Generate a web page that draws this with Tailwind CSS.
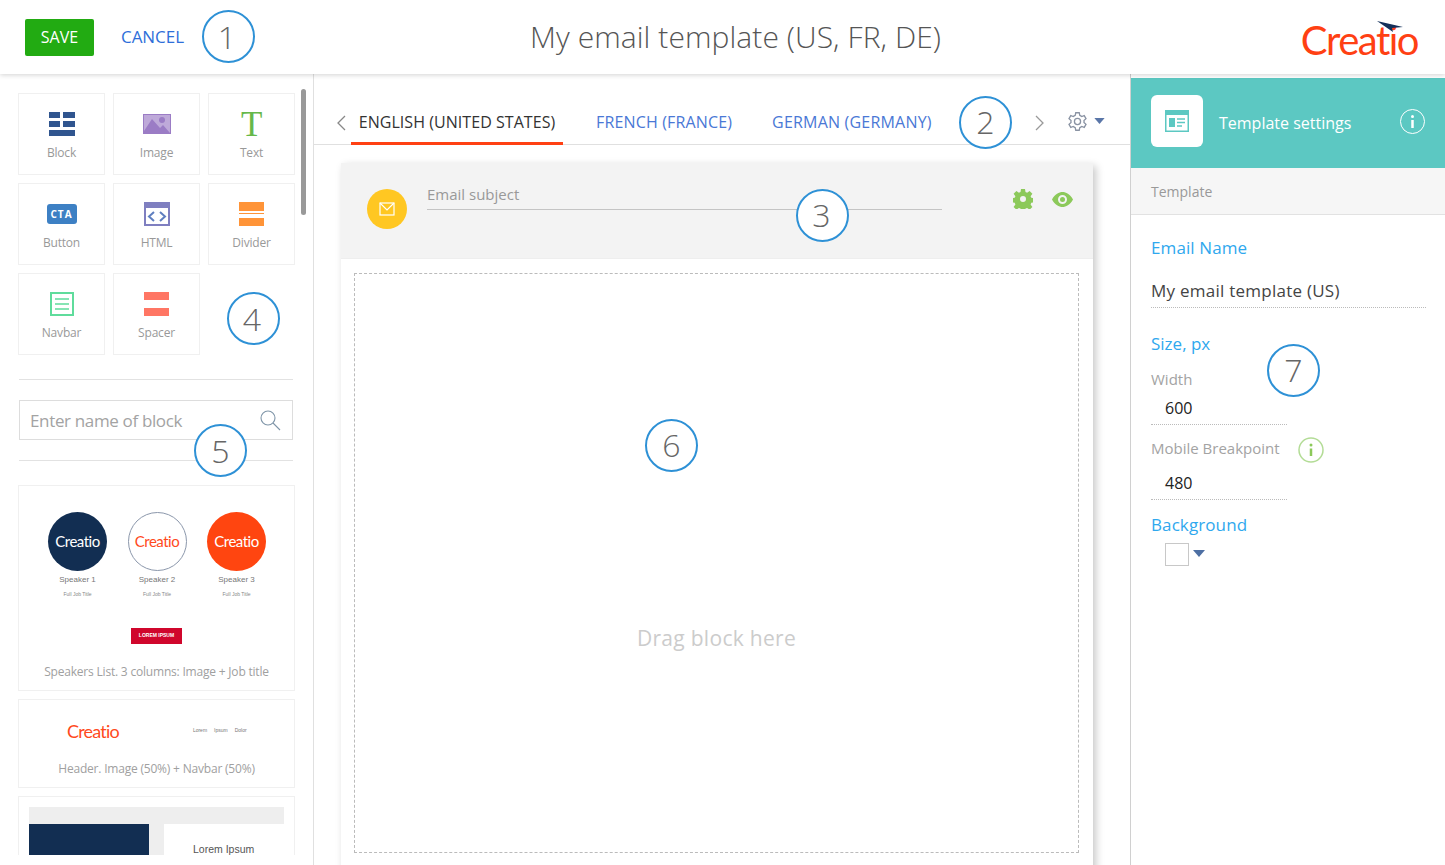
<!DOCTYPE html>
<html lang="en">
<head>
<meta charset="UTF-8">
<title>My email template</title>
<script src="https://cdn.jsdelivr.net/npm/@tailwindcss/browser@4"></script>
</head>
<body class="bg-white">
<div class="relative w-[1445px] h-[865px] overflow-hidden bg-white font-['Open_Sans',sans-serif] text-[#999]">

  <!-- header -->
  <header class="relative z-10 flex items-center h-[74px] pl-[25px] pr-[26px] bg-white shadow-[0_1px_5px_rgba(0,0,0,0.18)]">
    <button class="w-[69px] h-[37px] rounded-[2px] bg-[#22ab12] text-white text-[16px] tracking-[0.1px]">SAVE</button>
    <a class="ml-[27px] text-[17px] tracking-[-0.05px] text-[#2f6fd9]">CANCEL</a>
    <h1 class="absolute left-[530px] top-[15px] text-[30px] leading-[44px] font-light tracking-[0.07px] text-[#555] whitespace-nowrap">My email template (US, FR, DE)</h1>
    <div class="ml-auto relative w-[116px] h-[44px] mt-[6px]">
      <span class="absolute right-[1px] top-0 font-['Lato',sans-serif] text-[40px] leading-[44px] tracking-[-1.5px] text-[#ff4013]">Creatio</span>
      <svg class="absolute left-[74px] top-[3px]" width="27" height="12" viewBox="0 0 27 12"><path d="M0 0 L26 6 L15 7 L16 11 Z" fill="#14305a"/></svg>
    </div>
  </header>

  <div class="flex h-[791px]">
    <!-- left sidebar -->
    <aside class="relative w-[314px] shrink-0 border-r border-[#e0e0e0]">
      <div class="absolute left-[301px] top-[15px] w-[5px] h-[126px] rounded-full bg-[#999]"></div>
      <div class="h-[781px] overflow-hidden pl-[18px] pt-[19px]">
        <div class="grid grid-cols-[87px_87px_87px] auto-rows-[82px] gap-2 text-[12px] tracking-[-0.2px]">
          <div class="flex flex-col items-center border border-[#f0f0f0] pt-[18px]">
            <svg width="26" height="24" viewBox="0 0 26 24" fill="#30558f"><rect width="11" height="6"/><rect x="14" width="12" height="6"/><rect y="9" width="11" height="6"/><rect x="14" y="9" width="12" height="6"/><rect y="18" width="26" height="6"/></svg>
            <span class="mt-[9px] leading-[16px]">Block</span>
          </div>
          <div class="flex flex-col items-center border border-[#f0f0f0] pt-[20px]">
            <svg width="28" height="20" viewBox="0 0 28 20"><rect width="28" height="20" fill="#9b7cc5"/><rect x="1" y="1" width="26" height="18" fill="#fff" opacity=".35"/><path d="M1 19 L1 17 L9 5 L17 14 L20 11 L27 19 Z" fill="#9b7cc5"/><circle cx="19" cy="6" r="3" fill="#9b7cc5"/></svg>
            <span class="mt-[11px] leading-[16px]">Image</span>
          </div>
          <div class="flex flex-col items-center border border-[#f0f0f0] pt-[16px]">
            <span class="font-['Liberation_Serif',serif] text-[35px] leading-[30px] text-[#66b84a]">T</span>
            <span class="mt-[5px] leading-[16px]">Text</span>
          </div>

          <div class="flex flex-col items-center border border-[#f0f0f0] pt-[20px]">
            <span class="flex items-center justify-center w-[30px] h-[20px] rounded-[3px] bg-[#3d80c4] text-white text-[10px] font-bold tracking-[1px]">CTA</span>
            <span class="mt-[11px] leading-[16px]">Button</span>
          </div>
          <div class="flex flex-col items-center border border-[#f0f0f0] pt-[18px]">
            <svg width="26" height="24" viewBox="0 0 26 24"><rect x="1" y="1" width="24" height="22" fill="#fff" stroke="#7f7fc0" stroke-width="2"/><rect x="1" y="1" width="24" height="5" fill="#7f7fc0"/><path d="M10 10 L5 14.500 L10 19 M16 10 L21 14.500 L16 19" fill="none" stroke="#5f7fc0" stroke-width="2"/></svg>
            <span class="mt-[9px] leading-[16px]">HTML</span>
          </div>
          <div class="flex flex-col items-center border border-[#f0f0f0] pt-[18px]">
            <svg width="25" height="24" viewBox="0 0 25 24" fill="#ff9438"><rect width="25" height="9"/><rect y="11" width="25" height="1"/><rect y="16" width="25" height="8"/></svg>
            <span class="mt-[9px] leading-[16px]">Divider</span>
          </div>

          <div class="flex flex-col items-center border border-[#f0f0f0] pt-[18px]">
            <svg width="24" height="24" viewBox="0 0 24 24" fill="none" stroke="#5fdc9c" stroke-width="1.500"><rect x="1" y="1" width="22" height="22" stroke-width="2"/><path d="M5 7 H19 M5 12 H19 M5 17 H19"/></svg>
            <span class="mt-[9px] leading-[16px]">Navbar</span>
          </div>
          <div class="flex flex-col items-center border border-[#f0f0f0] pt-[18px]">
            <svg width="25" height="24" viewBox="0 0 25 24" fill="#ff7664"><rect width="25" height="8"/><rect y="16" width="25" height="8"/></svg>
            <span class="mt-[9px] leading-[16px]">Spacer</span>
          </div>
        </div>

        <div class="ml-px mt-[24px] w-[274px] border-t border-[#e2e2e2] pt-[20px]">
          <div class="flex items-center justify-between h-[40px] border border-[#ddd] pl-[10px] pr-[11px]">
            <span class="pt-px text-[17px] tracking-[-0.35px] text-[#a3a3a3]">Enter name of block</span>
            <svg width="21" height="21" viewBox="0 0 21 21" fill="none" stroke="#7f95a8" stroke-width="1.100"><circle cx="8" cy="8" r="7"/><path d="M13 13 L20 20"/></svg>
          </div>
          <div class="mt-[20px] border-t border-[#e2e2e2]"></div>
        </div>

        <!-- blocks -->
        <div class="mt-[24px] w-[277px] h-[206px] border border-[#f0f0f0] pt-[26px] text-center">
          <div class="grid grid-cols-[80px_79px_80px] justify-center pl-px">
            <div class="flex flex-col items-center">
              <span class="flex items-center justify-center w-[59px] h-[59px] rounded-full bg-[#122e52] text-white font-['Lato',sans-serif] text-[15px] tracking-[-0.5px]">Creatio</span>
              <span class="mt-[4px] font-['Liberation_Sans',sans-serif] text-[8px] leading-[10px] text-[#777]">Speaker 1</span>
              <span class="mt-[5px] font-['Liberation_Sans',sans-serif] text-[5px] leading-[8px] text-[#888]">Full Job Title</span>
            </div>
            <div class="flex flex-col items-center">
              <span class="flex items-center justify-center w-[59px] h-[59px] rounded-full border border-[#8b97ab] text-[#ff4a1c] font-['Lato',sans-serif] text-[15px] tracking-[-0.5px]">Creatio</span>
              <span class="mt-[4px] font-['Liberation_Sans',sans-serif] text-[8px] leading-[10px] text-[#777]">Speaker 2</span>
              <span class="mt-[5px] font-['Liberation_Sans',sans-serif] text-[5px] leading-[8px] text-[#888]">Full Job Title</span>
            </div>
            <div class="flex flex-col items-center">
              <span class="flex items-center justify-center w-[59px] h-[59px] rounded-full bg-[#ff4510] text-white font-['Lato',sans-serif] text-[15px] tracking-[-0.5px]">Creatio</span>
              <span class="mt-[4px] font-['Liberation_Sans',sans-serif] text-[8px] leading-[10px] text-[#777]">Speaker 3</span>
              <span class="mt-[5px] font-['Liberation_Sans',sans-serif] text-[5px] leading-[8px] text-[#888]">Full Job Title</span>
            </div>
          </div>
          <div class="mx-auto mt-[30px] flex items-center justify-center w-[51px] h-[16px] bg-[#d0062c] text-white font-['Liberation_Sans',sans-serif] text-[5px] font-bold">LOREM IPSUM</div>
          <p class="mt-[20px] text-[12px] leading-[16px] tracking-[-0.2px] text-[#a0a0a0]">Speakers List. 3 columns: Image + Job title</p>
        </div>

        <div class="mt-2 w-[277px] h-[89px] border border-[#f0f0f0]">
          <div class="flex h-[60px] items-center pl-[48px] pt-[2px]">
            <span class="font-['Lato',sans-serif] text-[18px] tracking-[-0.8px] text-[#ff4a1c]">Creatio</span>
            <span class="ml-[74px] font-['Liberation_Sans',sans-serif] text-[5px] text-[#777] whitespace-nowrap">Lorem</span>
            <span class="ml-[7px] font-['Liberation_Sans',sans-serif] text-[5px] text-[#777]">Ipsum</span>
            <span class="ml-[7px] font-['Liberation_Sans',sans-serif] text-[5px] text-[#777]">Dolor</span>
          </div>
          <p class="mt-[1px] text-center text-[12px] leading-[16px] tracking-[-0.2px] text-[#a0a0a0]">Header. Image (50%) + Navbar (50%)</p>
        </div>

        <div class="mt-2 w-[277px] h-[120px] border border-[#f0f0f0] p-[10px]">
          <div class="bg-[#eeeeee] pt-[17px] h-[100px] flex justify-between">
            <div class="w-[120px] bg-[#122e52]"></div>
            <div class="w-[120px] bg-white pl-[29px] pt-[18px] font-['Liberation_Sans',sans-serif] text-[10.500px] text-[#555]">Lorem Ipsum</div>
          </div>
        </div>
      </div>
    </aside>

    <!-- center -->
    <main class="w-[816px] shrink-0">
      <div class="relative flex items-end h-[71px] border-b border-[#e0e0e0] text-[16px]">
        <svg class="absolute left-[22px] top-[41px]" width="10" height="16" viewBox="0 0 10 16" fill="none" stroke="#888" stroke-width="1.300"><path d="M9 1 L2 8 L9 15"/></svg>
        <a class="ml-[37px] flex items-center justify-center w-[212px] h-[44px] border-b-[3px] border-[#ff4013] -mb-px tracking-[0.05px] text-[#333] whitespace-nowrap">ENGLISH (UNITED STATES)</a>
        <a class="ml-[33px] h-[44px] leading-[44px] tracking-[0.15px] text-[#4a78d6] whitespace-nowrap">FRENCH (FRANCE)</a>
        <a class="ml-[40px] h-[44px] leading-[44px] tracking-[0.2px] text-[#4a78d6] whitespace-nowrap">GERMAN (GERMANY)</a>
        <svg class="absolute left-[721px] top-[41px]" width="10" height="16" viewBox="0 0 10 16" fill="none" stroke="#999" stroke-width="1.300"><path d="M1 1 L8 8 L1 15"/></svg>
        <svg class="absolute left-[753px] top-[37px]" width="21" height="21" viewBox="0 0 24 24" fill="none" stroke="#8a93a3" stroke-width="1.500"><circle cx="12" cy="12" r="3.500"/><path d="M10 2 h4 l.6 3 a7.500 7.500 0 0 1 2.200 1.300 l2.900-1 2 3.500 -2.300 2 a7.500 7.500 0 0 1 0 2.400 l2.300 2 -2 3.500 -2.900-1 a7.500 7.500 0 0 1-2.200 1.300 l-.6 3 h-4 l-.6-3 a7.500 7.500 0 0 1-2.200-1.300 l-2.900 1 -2-3.500 2.300-2 a7.500 7.500 0 0 1 0-2.400 l-2.300-2 2-3.500 2.900 1 a7.500 7.500 0 0 1 2.200-1.300 Z"/></svg>
        <svg class="absolute left-[780px] top-[44px]" width="11" height="6" viewBox="0 0 12 7" fill="#5a76a8"><path d="M0 0 H12 L6 7 Z"/></svg>
      </div>

      <section class="ml-[27px] mt-[18px] w-[752px] h-[720px] bg-white shadow-[3px_3px_8px_rgba(0,0,0,0.22)]">
        <div class="relative flex h-[96px] bg-[#f3f3f3] border-b border-[#eee] pl-[26px] pt-[26px]">
          <span class="flex items-center justify-center w-[40px] h-[40px] rounded-full bg-[#ffc722]">
            <svg width="16" height="16" viewBox="0 0 16 16" fill="none" stroke="#fff" stroke-width="1.200"><rect x="1" y="2" width="14" height="12"/><path d="M1 2 L8 9 L15 2"/></svg>
          </span>
          <div class="ml-[20px] w-[515px] h-[27px] -mt-[6px] border-b border-[#c4c4c4] text-[15px] leading-[22px] text-[#999]">Email subject</div>
          <svg class="absolute left-[672px] top-[26px]" width="20" height="20" viewBox="0 0 20 20"><path fill="#8cc95a" fill-rule="evenodd" d="M8 0 h4 l.5 3 1.600.7 2.500-1.800 2.800 2.800-1.800 2.500.7 1.600 3 .5 v4 l-3 .5-.7 1.600 1.800 2.500-2.800 2.800-2.500-1.800-1.600.7-.5 3 h-4 l-.5-3-1.600-.7-2.500 1.800-2.800-2.800 1.800-2.500-.7-1.600-3-.5 v-4 l3-.5.7-1.600-1.800-2.500 2.800-2.800 2.500 1.800 1.600-.7 Z M10 7 a3 3 0 1 0 0 6 a3 3 0 1 0 0-6 Z"/></svg>
          <svg class="absolute left-[711px] top-[29px]" width="21" height="15" viewBox="0 0 21 15"><path fill="#8cc95a" fill-rule="evenodd" d="M0 7.500 C3 2 7 0 10.500 0 S18 2 21 7.500 C18 13 14 15 10.500 15 S3 13 0 7.500 Z M10.500 3 a4.500 4.500 0 1 0 0 9 a4.500 4.500 0 1 0 0-9 Z"/><circle cx="10.500" cy="7.500" r="2.500" fill="#8cc95a"/></svg>
        </div>
        <div class="ml-[13px] mt-[14px] w-[725px] h-[580px] border border-dashed border-[#bbb] pt-[349px] text-center text-[21px] leading-[30px] tracking-[0.3px] text-[#ccc]">Drag block here</div>
      </section>
    </main>

    <!-- right panel -->
    <aside class="flex-1 border-l border-[#d0d0d0]">
      <div class="mt-[4px] flex h-[90px] bg-[#5cc8c2] pl-[20px] pr-[20px] pt-[17px]">
        <span class="flex items-center justify-center w-[52px] h-[52px] rounded-[6px] bg-white">
          <svg width="24" height="22" viewBox="0 0 24 22"><rect x=".75" y=".75" width="22.500" height="20.500" fill="none" stroke="#5cc8c2" stroke-width="1.500"/><rect x="1" y="1" width="22" height="4" fill="#5cc8c2"/><rect x="4" y="8" width="6" height="9" fill="#5cc8c2"/><path d="M12 9 H20 M12 12.500 H20 M12 16 H17" stroke="#5cc8c2" stroke-width="1.500"/></svg>
        </span>
        <span class="ml-[16px] mt-[16px] text-[16px] leading-[24px] text-white">Template settings</span>
        <svg class="ml-auto mt-[14px]" width="25" height="25" viewBox="0 0 25 25" fill="none" stroke="#fff"><circle cx="12.500" cy="12.500" r="12"/><path d="M12.500 11 V19" stroke-width="2.500"/><circle cx="12.500" cy="7.500" r="1.500" fill="#fff" stroke="none"/></svg>
      </div>
      <div class="flex items-center h-[47px] bg-[#f6f6f6] border-b border-[#e2e2e2] pl-[20px] text-[14px] text-[#999]">Template</div>

      <div class="pl-[20px] pr-[19px]">
        <div class="mt-[21px] text-[17px] leading-[24px] tracking-[0.1px] text-[#2fa8ee]">Email Name</div>
        <div class="mt-[19px] h-[29px] border-b border-dotted border-[#bbb] text-[17px] leading-[24px] tracking-[0.25px] text-[#444]">My email template (US)</div>
        <div class="mt-[24px] text-[17px] leading-[24px] text-[#2fa8ee]">Size, px</div>
        <div class="mt-[13px] text-[15px] leading-[20px] text-[#a3a3a3]">Width</div>
        <div class="mt-[7px] pl-[14px] w-[136px] h-[29px] border-b border-dotted border-[#bbb] text-[16px] leading-[24px] text-[#222]">600</div>
        <div class="mt-[10px] flex items-center h-[26px] text-[15px] text-[#a3a3a3]">
          Mobile Breakpoint
          <svg class="ml-[18px] mt-[3px]" width="26" height="26" viewBox="0 0 26 26" fill="none" stroke="#b3dc96" stroke-width="1.500"><circle cx="13" cy="13" r="12"/><path d="M13 11.500 V19" stroke="#8cc95a" stroke-width="2.500"/><circle cx="13" cy="8" r="1.500" fill="#8cc95a" stroke="none"/></svg>
        </div>
        <div class="mt-[10px] pl-[14px] w-[136px] h-[29px] border-b border-dotted border-[#bbb] text-[16px] leading-[24px] text-[#222]">480</div>
        <div class="mt-[13px] text-[17px] leading-[24px] tracking-[0.1px] text-[#2fa8ee]">Background</div>
        <div class="mt-[6px] ml-[14px] flex items-center gap-[4px]">
          <span class="w-[24px] h-[23px] border border-[#c8c8c8] bg-white"></span>
          <svg class="mb-[2px]" width="12" height="7" viewBox="0 0 12 7" fill="#4d6fa3"><path d="M0 0 H12 L6 7 Z"/></svg>
        </div>
      </div>
    </aside>
  </div>

  <!-- numbered callouts -->
  <span class="absolute z-20 left-[202px] top-[10px] flex items-center justify-center w-[53px] h-[53px] rounded-full border-2 border-[#2e91d6] bg-white pr-[3px] text-[32px] font-light text-[#666]">1</span>
  <span class="absolute z-20 left-[959px] top-[96px] flex items-center justify-center w-[53px] h-[53px] rounded-full border-2 border-[#2e91d6] bg-white pb-[2px] text-[32px] font-light text-[#666]">2</span>
  <span class="absolute z-20 left-[796px] top-[189px] flex items-center justify-center w-[53px] h-[53px] rounded-full border-2 border-[#2e91d6] bg-white pb-[2px] pr-[2px] text-[32px] font-light text-[#666]">3</span>
  <span class="absolute z-20 left-[227px] top-[292px] flex items-center justify-center w-[53px] h-[53px] rounded-full border-2 border-[#2e91d6] bg-white pr-[3px] text-[32px] font-light text-[#666]">4</span>
  <span class="absolute z-20 left-[194px] top-[424px] flex items-center justify-center w-[53px] h-[53px] rounded-full border-2 border-[#2e91d6] bg-white text-[32px] font-light text-[#666]">5</span>
  <span class="absolute z-20 left-[645px] top-[419px] flex items-center justify-center w-[53px] h-[53px] rounded-full border-2 border-[#2e91d6] bg-white pb-[2px] text-[32px] font-light text-[#666]">6</span>
  <span class="absolute z-20 left-[1267px] top-[344px] flex items-center justify-center w-[53px] h-[53px] rounded-full border-2 border-[#2e91d6] bg-white pb-[2px] text-[32px] font-light text-[#666]">7</span>
</div>
</body>
</html>
